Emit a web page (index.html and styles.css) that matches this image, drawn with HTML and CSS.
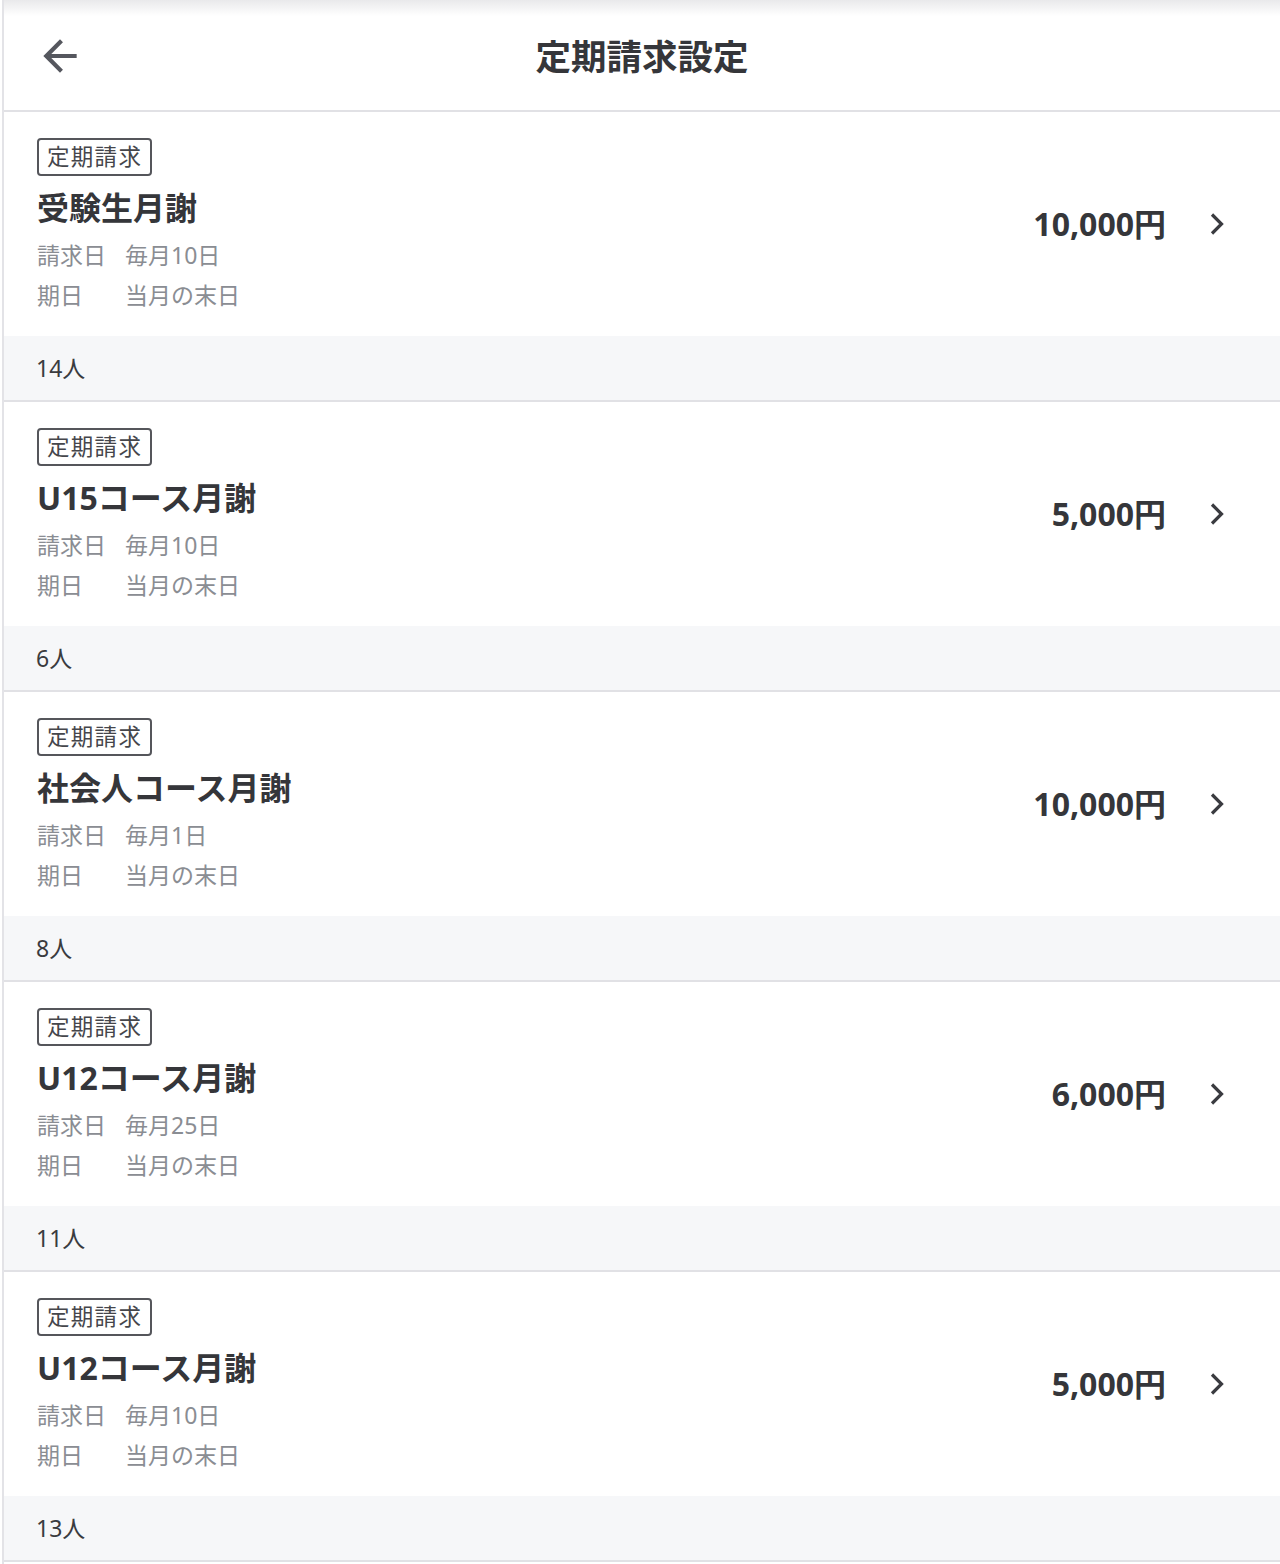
FILE: index.html
```html
<!DOCTYPE html>
<html lang="ja">
<head>
<meta charset="utf-8">
<link rel="stylesheet" href="styles.css">
</head>
<body>
<div class="page">
  <header class="header">
    <svg class="back" viewBox="0 0 24 24" width="50" height="50"><path d="M20 11H7.83l5.59-5.59L12 4l-8 8 8 8 1.41-1.41L7.83 13H20v-2z" fill="#55575e"/></svg>
    <h1 class="title">定期請求設定</h1>
  </header>
  <ul class="list">
    <li class="item">
      <div class="main">
        <div class="info">
          <span class="tag">定期請求</span>
          <div class="name">受験生月謝</div>
          <dl class="meta"><dt>請求日</dt><dd>毎月10日</dd><dt>期日</dt><dd>当月の末日</dd></dl>
        </div>
        <div class="price">10,000円</div>
        <svg class="chev" viewBox="0 0 28 28" width="28" height="28"><path d="M8 4.5 L17.5 14 L8 23.5" fill="none" stroke="#3a3b40" stroke-width="3.2"/></svg>
      </div>
      <div class="count">14人</div>
    </li>
    <li class="item">
      <div class="main">
        <div class="info">
          <span class="tag">定期請求</span>
          <div class="name">U15コース月謝</div>
          <dl class="meta"><dt>請求日</dt><dd>毎月10日</dd><dt>期日</dt><dd>当月の末日</dd></dl>
        </div>
        <div class="price">5,000円</div>
        <svg class="chev" viewBox="0 0 28 28" width="28" height="28"><path d="M8 4.5 L17.5 14 L8 23.5" fill="none" stroke="#3a3b40" stroke-width="3.2"/></svg>
      </div>
      <div class="count">6人</div>
    </li>
    <li class="item">
      <div class="main">
        <div class="info">
          <span class="tag">定期請求</span>
          <div class="name">社会人コース月謝</div>
          <dl class="meta"><dt>請求日</dt><dd>毎月1日</dd><dt>期日</dt><dd>当月の末日</dd></dl>
        </div>
        <div class="price">10,000円</div>
        <svg class="chev" viewBox="0 0 28 28" width="28" height="28"><path d="M8 4.5 L17.5 14 L8 23.5" fill="none" stroke="#3a3b40" stroke-width="3.2"/></svg>
      </div>
      <div class="count">8人</div>
    </li>
    <li class="item">
      <div class="main">
        <div class="info">
          <span class="tag">定期請求</span>
          <div class="name">U12コース月謝</div>
          <dl class="meta"><dt>請求日</dt><dd>毎月25日</dd><dt>期日</dt><dd>当月の末日</dd></dl>
        </div>
        <div class="price">6,000円</div>
        <svg class="chev" viewBox="0 0 28 28" width="28" height="28"><path d="M8 4.5 L17.5 14 L8 23.5" fill="none" stroke="#3a3b40" stroke-width="3.2"/></svg>
      </div>
      <div class="count">11人</div>
    </li>
    <li class="item">
      <div class="main">
        <div class="info">
          <span class="tag">定期請求</span>
          <div class="name">U12コース月謝</div>
          <dl class="meta"><dt>請求日</dt><dd>毎月10日</dd><dt>期日</dt><dd>当月の末日</dd></dl>
        </div>
        <div class="price">5,000円</div>
        <svg class="chev" viewBox="0 0 28 28" width="28" height="28"><path d="M8 4.5 L17.5 14 L8 23.5" fill="none" stroke="#3a3b40" stroke-width="3.2"/></svg>
      </div>
      <div class="count">13人</div>
    </li>
  </ul>
</div>
</body>
</html>
```

FILE: styles.css
```css
* { box-sizing: border-box; }
html, body {
  margin: 0;
  padding: 0;
  background: #ffffff;
}
body {
  font-family: "Noto Sans", "Noto Sans CJK JP", sans-serif;
  color: #35363a;
}
.page {
  margin-left: 2px;
  border-left: 2px solid #e3e3e7;
  min-height: 1564px;
}
.header {
  position: relative;
  height: 112px;
  border-bottom: 2px solid #e1e1e5;
  display: flex;
  align-items: center;
  justify-content: center;
  background: linear-gradient(#e9e9eb 0px, #ffffff 16px);
}
.back {
  position: absolute;
  left: 31px;
  top: 31px;
}
.title {
  margin: 0;
  font-size: 35.5px;
  font-weight: 700;
  line-height: 48px;
  color: #35363a;
  padding-top: 2px;
}
.list {
  list-style: none;
  margin: 0;
  padding: 0;
}
.item {
  border-bottom: 2px solid #e1e1e5;
}
.main {
  display: flex;
  align-items: center;
  height: 224px;
  padding: 0 48px 0 33px;
}
.info {
  flex: 1;
  display: flex;
  flex-direction: column;
  align-items: flex-start;
  padding: 26px 0 21px;
}
.tag {
  display: inline-block;
  height: 38px;
  line-height: 33px;
  padding: 0 8px;
  border: 2px solid #55565b;
  border-radius: 4px;
  font-size: 22.5px;
  letter-spacing: 1.3px;
  color: #45464b;
}
.name {
  margin-top: 8px;
  margin-bottom: 3px;
  font-size: 32px;
  font-weight: 700;
  line-height: 48px;
  color: #35363a;
}
.meta {
  margin: 0;
  display: grid;
  grid-template-columns: 88px auto;
  font-size: 23px;
  line-height: 40px;
  color: #8a8d93;
}
.meta dt, .meta dd {
  margin: 0;
}
.price {
  font-size: 32px;
  font-weight: 700;
  line-height: 48px;
  color: #35363a;
  margin-right: 38px;
}
.chev {
  display: block;
}
.count {
  height: 64px;
  background: #f6f7f9;
  padding-left: 32px;
  font-size: 23px;
  line-height: 64px;
  color: #3a3b3f;
}
```
